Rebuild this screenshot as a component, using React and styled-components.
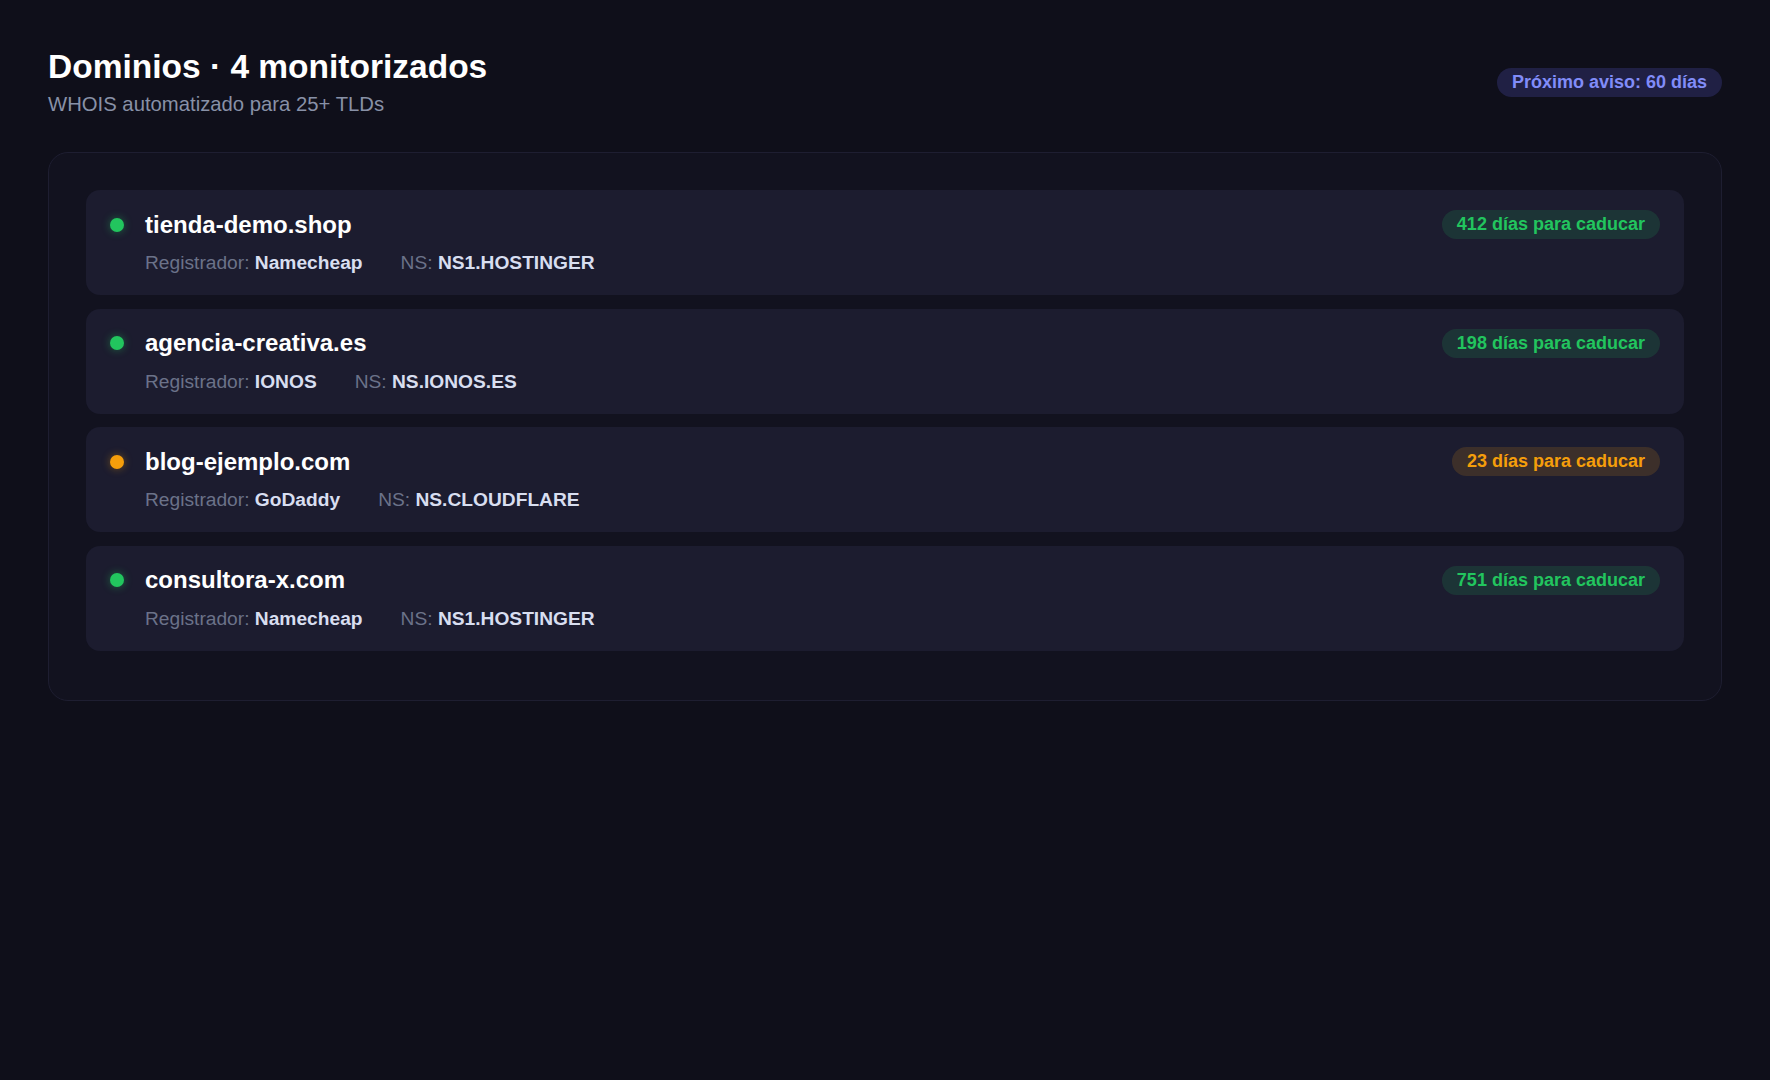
import React from "react";
import styled, { createGlobalStyle } from "styled-components";

const GlobalStyle = createGlobalStyle`
  html, body {
    margin: 0;
    padding: 0;
    background: #0f0f1a;
  }
  body {
    font-family: "Liberation Sans", Arial, sans-serif;
    color: #f1f5f9;
    -webkit-font-smoothing: antialiased;
  }
  * { box-sizing: border-box; }
`;

const Page = styled.div`
  min-height: 100vh;
  padding: 48px 48px;
  background: #0f0f1a;
`;

const Header = styled.header`
  display: flex;
  align-items: center;
  justify-content: space-between;
  margin-bottom: 36px;
`;

const TitleBlock = styled.div`
  display: flex;
  flex-direction: column;
  gap: 6px;
`;

const Title = styled.h1`
  margin: 0;
  font-size: 33.5px;
  line-height: 38px;
  font-weight: 700;
  color: #ffffff;
`;

const Subtitle = styled.p`
  margin: 0;
  font-size: 20.3px;
  line-height: 24px;
  color: #8891a7;
`;

const Pill = styled.span`
  display: inline-flex;
  align-items: center;
  padding: 4px 15px;
  border-radius: 999px;
  font-size: 18px;
  line-height: 21px;
  font-weight: 700;
  white-space: nowrap;
  color: ${(p) => p.$fg};
  background: ${(p) => p.$bg};
`;

const Card = styled.section`
  background: #12121f;
  border: 1px solid #1e1e31;
  border-radius: 20px;
  padding: 37px 37px 49px;
`;

const List = styled.div`
  display: flex;
  flex-direction: column;
  gap: 13.5px;
`;

const Row = styled.div`
  display: grid;
  grid-template-columns: 14px 1fr auto;
  column-gap: 21px;
  row-gap: 12px;
  align-items: center;
  padding: 20px 24px 20px 24px;
  background: #1c1c2f;
  border-radius: 14px;
`;

const Dot = styled.span`
  width: 14px;
  height: 14px;
  border-radius: 50%;
  background: ${(p) => p.$color};
  box-shadow: 0 0 8px ${(p) => p.$glow};
`;

const Domain = styled.div`
  font-size: 24px;
  line-height: 28px;
  font-weight: 700;
  color: #ffffff;
`;

const Meta = styled.div`
  grid-column: 2 / 4;
  display: flex;
  gap: 38px;
  font-size: 19.2px;
  line-height: 24px;
  color: #6b7289;
`;

const MetaItem = styled.span`
  white-space: nowrap;
`;

const MetaValue = styled.strong`
  font-weight: 700;
  color: #d8def0;
`;

const statusColors = {
  ok: {
    dot: "#22c55e",
    glow: "rgba(34,197,94,0.45)",
    fg: "#22c55e",
    bg: "rgba(34,197,94,0.15)",
  },
  warn: {
    dot: "#f59e0b",
    glow: "rgba(245,158,11,0.4)",
    fg: "#f59e0b",
    bg: "rgba(245,158,11,0.15)",
  },
};

const domains = [
  { name: "tienda-demo.shop", registrar: "Namecheap", ns: "NS1.HOSTINGER", days: 412, status: "ok" },
  { name: "agencia-creativa.es", registrar: "IONOS", ns: "NS.IONOS.ES", days: 198, status: "ok" },
  { name: "blog-ejemplo.com", registrar: "GoDaddy", ns: "NS.CLOUDFLARE", days: 23, status: "warn" },
  { name: "consultora-x.com", registrar: "Namecheap", ns: "NS1.HOSTINGER", days: 751, status: "ok" },
];

export default function App() {
  return (
    <>
      <GlobalStyle />
      <Page>
        <Header>
          <TitleBlock>
            <Title>Dominios · 4 monitorizados</Title>
            <Subtitle>WHOIS automatizado para 25+ TLDs</Subtitle>
          </TitleBlock>
          <Pill $fg="#818cf8" $bg="rgba(99,102,241,0.2)">
            Próximo aviso: 60 días
          </Pill>
        </Header>
        <Card>
          <List>
            {domains.map((d) => {
              const c = statusColors[d.status];
              return (
                <Row key={d.name}>
                  <Dot $color={c.dot} $glow={c.glow} />
                  <Domain>{d.name}</Domain>
                  <Pill $fg={c.fg} $bg={c.bg}>
                    {d.days} días para caducar
                  </Pill>
                  <Meta>
                    <MetaItem>
                      Registrador: <MetaValue>{d.registrar}</MetaValue>
                    </MetaItem>
                    <MetaItem>
                      NS: <MetaValue>{d.ns}</MetaValue>
                    </MetaItem>
                  </Meta>
                </Row>
              );
            })}
          </List>
        </Card>
      </Page>
    </>
  );
}
